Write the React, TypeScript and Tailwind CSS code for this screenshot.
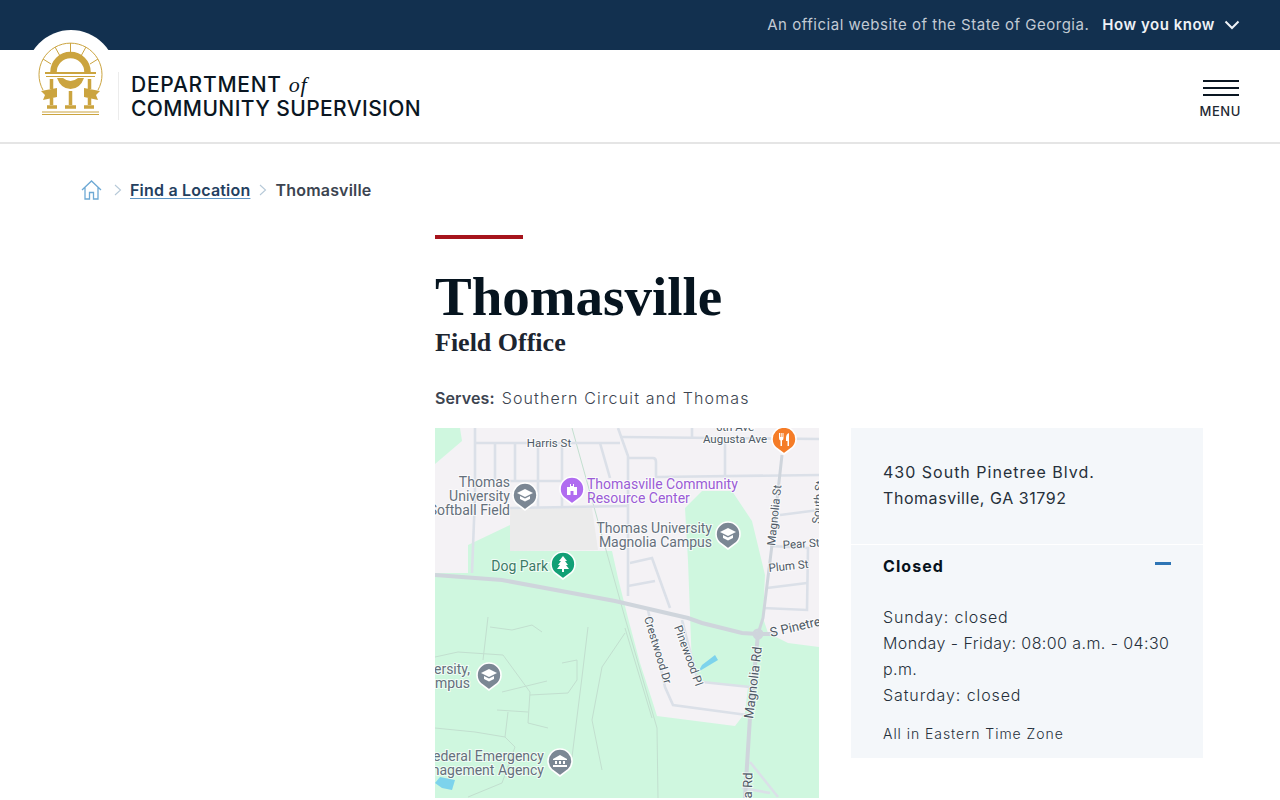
const sans = "font-['Inter','Noto_Sans',sans-serif]"

const roads = [
  "M40 0V67L37 145",
  "M40 15H185",
  "M187 9L384 11",
  "M60 15V52",
  "M80 15V52",
  "M103 15V80",
  "M127 15V78",
  "M75 53H133",
  "M75 80L193 78",
  "M165 15L175 50",
  "M183 0L193 28V168",
  "M193 30H218Q221 30 221 34V49L384 47",
  "M290 10V50",
  "M257 0V9",
  "M345 87L384 82",
  "M335 118L373 120L372 182L328 180",
  "M332 160L372 155",
  "M195 135L217 130L235 180",
  "M193 158L220 153",
  "M213 182L230 259L238 277L312 287",
  "M247 192L263 254",
  "M267 254L315 259",
  "M315 334L343 369",
  "M307 360L335 365",
]

const paths = [
  "M53 189L48 232",
  "M0 229L23 224L68 227L95 264L93 295L113 300",
  "M67 264L112 253",
  "M95 267L133 265L142 252V232L127 235",
  "M62 282L93 284",
  "M73 284L70 309L40 304L0 300",
  "M55 199L77 202L97 197L107 204",
  "M153 199L147 249L137 329",
  "M190 205L167 239L157 292L167 342",
  "M70 309L80 319L67 355L33 369",
  "M137 0L190 190L222 300L223 370",
  "M190 200L217 290",
]

function Pin({ x, y, fill, children }: { x: number; y: number; fill: string; children: React.ReactNode }) {
  return (
    <g transform={`translate(${x} ${y})`}>
      <path d="M0 15L-8 9A12 12 0 1 1 8 9Z" fill={fill} stroke="#fff" strokeWidth="1.6" />
      {children}
    </g>
  )
}

const Cap = () => (
  <g fill="#fff">
    <path d="M0 -6L8 -2L0 2L-8 -2Z" />
    <path d="M-5 1L0 3.5L5 1V4L0 6.5L-5 4Z" />
  </g>
)

function Label({ x, y, children, fill = "#65707c", anchor = "end", rotate, size = 14 }: { x: number; y: number; children: string; fill?: string; anchor?: "start" | "middle" | "end"; rotate?: number; size?: number }) {
  return (
    <text
      x={x}
      y={y}
      fill={fill}
      fontSize={size}
      textAnchor={anchor}
      transform={rotate ? `rotate(${rotate} ${x} ${y})` : undefined}
      stroke="#fff"
      strokeWidth="2"
      strokeOpacity="0.7"
      paintOrder="stroke"
      fontFamily="Roboto, sans-serif"
    >
      {children}
    </text>
  )
}

function MapView() {
  return (
    <svg viewBox="0 0 384 370" className="block h-[370px] w-[384px] shrink-0 bg-[#f4f2f5]">
      <path d="M0 0H25L27 13L0 36Z" fill="#cff7df" />
      <path
        d="M33 117L75 97V123H177L183 150L193 190L205 235L217 272L222 288L300 298L310 285L313 259L267 254L257 240L253 133L250 80L267 63H297L317 93L330 147L328 190L333 205L353 215L384 219V370H0V145H33Z"
        fill="#cff7df"
      />
      <path d="M75 80H157L163 122L75 123Z" fill="#ebebeb" />
      <g fill="none" stroke="#c2dfcf" strokeWidth="1">
        {paths.map((d) => (
          <path key={d} d={d} />
        ))}
      </g>
      <g fill="none" stroke="#dbe0e8" strokeWidth="2.6">
        {roads.map((d) => (
          <path key={d} d={d} />
        ))}
      </g>
      <g fill="none" stroke="#cfd5dc" strokeWidth="4">
        <path d="M347 27L337 117L328 190L323 206" strokeWidth="3" />
        <path d="M323 206L315 289L310 370" />
        <path d="M0 147L67 152L180 173L253 190L267 195L307 205L323 206L340 206" />
        <circle cx="323" cy="206" r="4" strokeWidth="3" />
      </g>
      <path d="M263 244L283 232L280 227L267 237Z" fill="#7dd3ec" />
      <path d="M0 355L5 349L20 352L17 362L7 360Z" fill="#7dd3ec" />

      <Label x={114} y={19} anchor="middle" size={11.5} fill="#4f5a66">Harris St</Label>
      <Label x={300} y={3} anchor="middle" size={11.5} fill="#4f5a66">6th Ave</Label>
      <Label x={300} y={15} anchor="middle" size={11.5} fill="#4f5a66">Augusta Ave</Label>
      <Label x={75} y={59}>Thomas</Label>
      <Label x={75} y={73}>University</Label>
      <Label x={75} y={87}>Softball Field</Label>
      <Label x={152} y={61} anchor="start" fill="#9a5cd6">Thomasville Community</Label>
      <Label x={152} y={75} anchor="start" fill="#9a5cd6">Resource Center</Label>
      <Label x={277} y={105}>Thomas University</Label>
      <Label x={277} y={119}>Magnolia Campus</Label>
      <Label x={113} y={143} fill="#3c7a66">Dog Park</Label>
      <Label x={340} y={118} anchor="start" rotate={-84} size={11.5} fill="#4f5a66">Magnolia St</Label>
      <Label x={348} y={121} anchor="start" rotate={-4} size={11.5} fill="#4f5a66">Pear St</Label>
      <Label x={334} y={144} anchor="start" rotate={-6} size={11.5} fill="#4f5a66">Plum St</Label>
      <Label x={385} y={96} anchor="start" rotate={-85} size={11.5} fill="#4f5a66">South St</Label>
      <Label x={209} y={190} anchor="start" rotate={73} size={11.5} fill="#4f5a66">Crestwood Dr</Label>
      <Label x={239} y={199} anchor="start" rotate={70} size={11.5} fill="#4f5a66">Pinewood Pl</Label>
      <Label x={318} y={291} anchor="start" rotate={-83} size={13} fill="#4f5a66">Magnolia Rd</Label>
      <Label x={315} y={417} anchor="start" rotate={-88} size={13} fill="#4f5a66">Magnolia Rd</Label>
      <Label x={336} y={209} anchor="start" rotate={-13} size={13} fill="#4f5a66">S Pinetree Rd</Label>
      <Label x={35} y={246}>University,</Label>
      <Label x={35} y={260}>Campus</Label>
      <Label x={109} y={333}>Federal Emergency</Label>
      <Label x={109} y={347}>Management Agency</Label>

      <Pin x={90} y={67} fill="#7b8794"><Cap /></Pin>
      <Pin x={293} y={106} fill="#7b8794"><Cap /></Pin>
      <Pin x={54} y={247} fill="#7b8794"><Cap /></Pin>
      <Pin x={137} y={61} fill="#b06cf0">
        <path d="M-5 6V-2L-2 -2V-5H-1V-3H1V-5H2V-2H5V6H1.5V2H-1.5V6Z" fill="#fff" />
      </Pin>
      <Pin x={128} y={136} fill="#12a076">
        <path d="M0 -8L4 -3H2L5 1H3L6 5H1V8H-1V5H-6L-3 1H-5L-2 -3H-4Z" fill="#fff" />
      </Pin>
      <Pin x={349} y={11} fill="#f57c27">
        <path d="M-5 -6V-1Q-5 1 -3.5 1.5V7H-2V1.5Q-0.5 1 -0.5 -1V-6H-1.5V-2H-2.3V-6H-3.3V-2H-4V-6ZM5 -6Q2 -5 2 -1V2H3.5V7H5Z" fill="#fff" />
      </Pin>
      <Pin x={125} y={333} fill="#7b8794">
        <path d="M-7 -2L0 -6L7 -2V-1H-7ZM-5 0H-3V3H-5ZM-1 0H1V3H-1ZM3 0H5V3H3ZM-7 4H7V6H-7Z" fill="#fff" />
      </Pin>
    </svg>
  )
}

function Seal() {
  return (
    <svg viewBox="0 0 66 74" className="block h-[74px] w-[66px]" fill="none" stroke="#cba43f">
      <path d="M6 48A31.5 31.5 0 1 1 61 48" strokeWidth="1" />
      <path d="M33.5 1V11M18 5L23 14M6 17L14 22M49 5L44 14M61 17L53 22" strokeWidth="1" />
      <path d="M16.5 30A17 17 0 0 1 50.5 30" strokeWidth="6.5" />
      <path d="M8 31H59" strokeWidth="2" />
      <path d="M9 34.5H58" strokeWidth="1" />
      <path d="M20 36H26Q33.5 42 41 36H47Q43 47 33.5 47Q24 47 20 36Z" fill="#cba43f" stroke="none" />
      <path d="M14.5 37V47M14.5 56V63M33.5 49V63M52.5 37V47M52.5 56V63" strokeWidth="3.5" />
      <path d="M4 49L20 46V55L6 58L8 53ZM63 49L47 46V55L61 58L59 53Z" fill="#cba43f" stroke="none" />
      <path d="M10 65H20M28 65H39M47 65H57" strokeWidth="3.5" />
      <path d="M5 70H62M5 72.5H62" strokeWidth="1" />
    </svg>
  )
}

export default function App() {
  return (
    <div className={`${sans} h-[800px] overflow-hidden bg-white`}>
      <div className="flex h-[50px] items-center justify-end bg-[#12304f] pr-10 text-[15px]">
        <span className="tracking-[0.52px] text-[#c2cad4]">An official website of the State of Georgia.</span>
        <span className="ml-[13px] font-semibold tracking-[0.53px] text-[#eef2f6]">How you know</span>
        <svg viewBox="0 0 16 10" className="ml-[9px] h-[10px] w-4" fill="none" stroke="#eef2f6" strokeWidth="2">
          <path d="M1.5 1.5L8 8L14.5 1.5" />
        </svg>
      </div>

      <header className="relative flex h-[94px] items-start border-b-2 border-[#e5e5e5] pl-[118px] pt-[22px]">
        <div className="absolute left-[26px] top-[-20px] h-[90px] w-[90px] rounded-full bg-white" />
        <div className="absolute left-[37px] top-[-8px]">
          <Seal />
        </div>
        <div className="relative h-12 border-l border-[#ececec] pl-3 text-[21px] font-medium leading-6 text-[#0a1622]">
          <div className="flex h-6 translate-y-px items-center tracking-[0.75px]">
            DEPARTMENT
            <span className="ml-[7px] font-['Liberation_Serif',serif] text-[22px] italic">of</span>
          </div>
          <div className="translate-y-px tracking-[0.4px]">COMMUNITY SUPERVISION</div>
        </div>
        <div className="ml-auto mr-[41px] mt-2 flex flex-col items-end">
          <div className="flex w-9 flex-col gap-[5px]">
            <div className="h-0.5 bg-[#0a1622]" />
            <div className="h-0.5 bg-[#0a1622]" />
            <div className="h-0.5 bg-[#0a1622]" />
          </div>
          <div className="mr-[-2px] mt-[7px] text-[13px] font-medium leading-4 tracking-[0.6px] text-[#1f2933]">MENU</div>
        </div>
      </header>

      <nav className="mt-[35px] flex h-[22px] items-center pl-[81px] text-[16px] font-semibold">
        <svg viewBox="0 0 21 20" className="h-5 w-[21px]" fill="none" stroke="#6ea9d4" strokeWidth="1.3">
          <path d="M1 10L10.5 1L20 10M4 7.5V19H8.5V12.5H12.5V19H17V7.5" />
        </svg>
        <svg viewBox="0 0 8 12" className="ml-3 h-3 w-2" fill="none" stroke="#b6c9d8" strokeWidth="1.1">
          <path d="M1 1L6.5 6L1 11" />
        </svg>
        <a className="ml-[8px] tracking-[0.2px] text-[#24405f] underline decoration-[#5c94c4] underline-offset-2">Find a Location</a>
        <svg viewBox="0 0 8 12" className="ml-[9px] h-3 w-2" fill="none" stroke="#b6c9d8" strokeWidth="1.1">
          <path d="M1 1L6.5 6L1 11" />
        </svg>
        <span className="ml-[8px] tracking-[0.2px] text-[#3c4450]">Thomasville</span>
      </nav>

      <main className="ml-[435px] mt-[34px] w-[768px]">
        <div className="h-1 w-[88px] bg-[#a6141c]" />
        <h1 className="mt-[28px] font-['Liberation_Serif',serif] text-[55px] font-bold leading-[60px] text-[#06141f]">Thomasville</h1>
        <div className="mt-[1px] font-['Liberation_Serif',serif] text-[26px] font-bold leading-[30px] text-[#1c2530]">Field Office</div>
        <div className="mt-[28px] flex h-6 items-center text-[16px] text-[#3c4450]">
          <span className="font-semibold tracking-[0.1px]">Serves:</span>
          <span className="ml-[7px] font-light tracking-[1.15px]">Southern Circuit and Thomas</span>
        </div>
        <div className="mt-[18px] flex items-start gap-8">
          <MapView />
          <aside className="h-[330px] w-[352px] bg-[#f4f7fa] text-[#26303a]">
            <div className="h-[117px] border-b border-white px-8 pt-[31px] text-[16px] leading-[26px]">
              <div className="tracking-[1px]">430 South Pinetree Blvd.</div>
              <div className="tracking-[0.55px]">Thomasville, GA 31792</div>
            </div>
            <div className="flex h-11 items-center justify-between px-8 pb-[3px]">
              <span className="text-[16px] font-bold tracking-[1.05px] text-[#08121c]">Closed</span>
              <span className="mb-[4px] h-[3px] w-4 bg-[#2e75b5]" />
            </div>
            <div className="px-8 pt-[15px] text-[16px] font-light leading-[26px]">
              <div className="tracking-[0.8px]">Sunday: closed</div>
              <div className="tracking-[0.42px]">Monday - Friday: 08:00 a.m. - 04:30 p.m.</div>
              <div className="tracking-[0.9px]">Saturday: closed</div>
              <div className="mt-[13px] translate-y-px text-[14px] leading-[24px] tracking-[0.95px]">All in Eastern Time Zone</div>
            </div>
          </aside>
        </div>
      </main>
    </div>
  )
}
